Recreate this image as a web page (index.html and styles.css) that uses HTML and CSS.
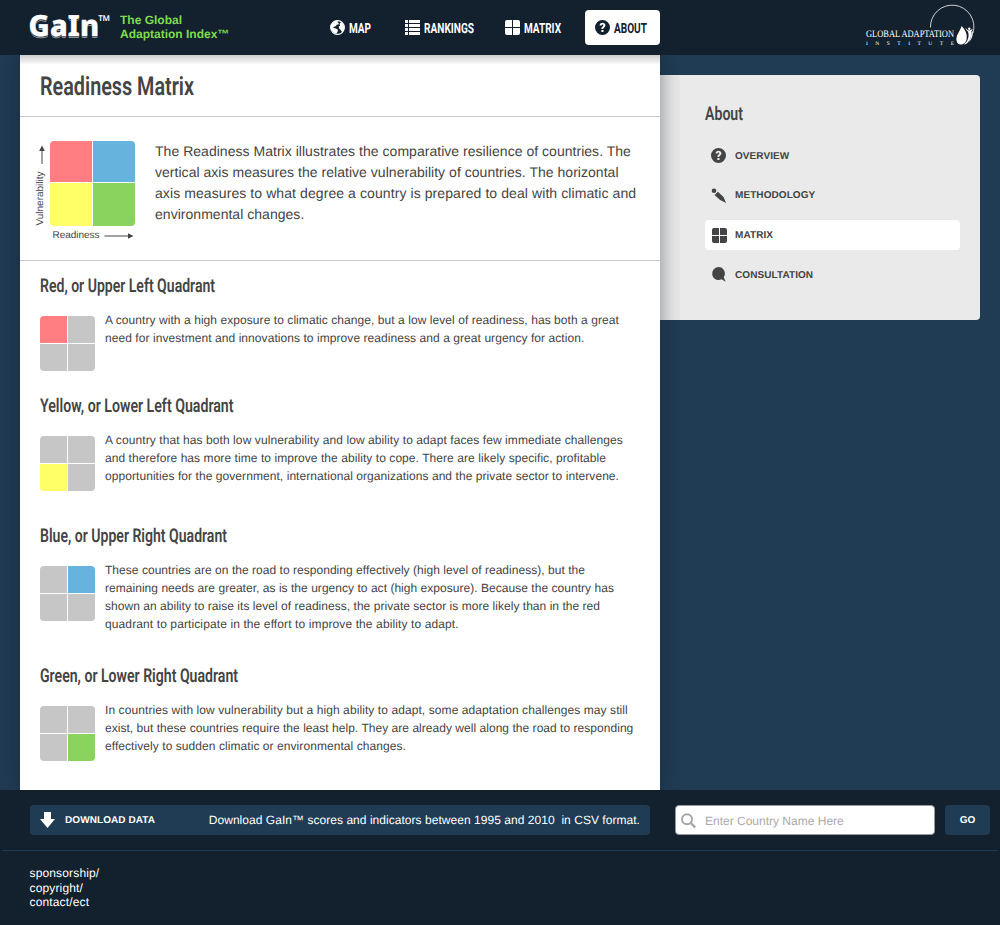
FILE: index.html
```html
<!DOCTYPE html>
<html lang="en">
<head>
<meta charset="utf-8">
<title>GaIn – Readiness Matrix</title>
<link rel="stylesheet" href="styles.css">
</head>
<body>
<svg width="0" height="0" class="defs">
  <symbol id="grid" viewBox="0 0 15 15"><path d="M2 0h5v7H0V2a2 2 0 0 1 2-2zM8 0h5a2 2 0 0 1 2 2v5H8zM0 8h7v7H2a2 2 0 0 1-2-2zM8 8h7v5a2 2 0 0 1-2 2H8z"/></symbol>
  <symbol id="help" viewBox="0 0 15 15"><path fill-rule="evenodd" d="M7.5 0a7.5 7.5 0 1 1 0 15a7.5 7.5 0 0 1 0-15zM4.6 5.600h2c0-.8.3-1.100.9-1.100.5 0 .8.3.8.7 0 .5-.3.8-.8 1.200-.7.6-1.100 1.100-1.100 2.100v.6h1.900c0-.8.3-1.100.9-1.600.7-.6 1.200-1.100 1.200-2.200 0-1.600-1.200-2.600-2.900-2.600-1.800 0-2.900 1-2.900 2.900zM6.400 9.900h2.100v2.100h-2.100z"/></symbol>
</svg>
<header class="top">
  <a class="logo"><span>GaIn</span><sup>TM</sup></a>
  <div class="tagline">The Global<br>Adaptation Index™</div>
  <nav class="nav">
    <a class="map"><svg width="15" height="15"><circle cx="7.500" cy="7.500" r="6.900" fill="none" stroke="#fff" stroke-width="1.100"/><path fill="#fff" d="M1.500 4L4.500 1l3.500-.5-.5 1.700 1.500 1-.8 1.300-1.500.2-1 1.500-2 .6L3.300 7.900l2 .4 2.700 1.400-.4 2-1.600 2.300-2.500-1.400L1 9.500.7 6zM10 3l1.500-1 2 2.300 1 3-.8 3.700-1.600 1.500-1.300-2.600L9 8.500l-.2-2 1.500-1.100-.8-1z"/></svg><svg class="cond" width="22" height="16"><text x="0" y="13" textLength="22" lengthAdjust="spacingAndGlyphs">MAP</text></svg></a>
    <a class="rank"><svg width="15" height="15" fill="#fff"><path d="M0 0h3v3H0zM4 0h11v3H4zM0 4h3v3H0zM4 4h11v3H4zM0 8h3v3H0zM4 8h11v3H4zM0 12h3v3H0zM4 12h11v3H4z"/></svg><svg class="cond" width="51" height="16"><text x="0" y="13" textLength="50" lengthAdjust="spacingAndGlyphs">RANKINGS</text></svg></a>
    <a class="matrix"><svg width="15" height="15" fill="#fff"><use href="#grid"/></svg><svg class="cond" width="38" height="16"><text x="0" y="13" textLength="37" lengthAdjust="spacingAndGlyphs">MATRIX</text></svg></a>
    <a class="active"><svg width="15" height="15" fill="#13202d"><use href="#help"/></svg><svg class="cond" width="34" height="16"><text x="0" y="13" textLength="33" lengthAdjust="spacingAndGlyphs">ABOUT</text></svg></a>
  </nav>
  <svg class="institute" width="112" height="48">
    <path d="M65.500 22.500A21.700 21.700 0 1 1 108 28" fill="none" stroke="#fff" stroke-width=".8"/>
    <path d="M96.500 21c4 4 5.800 8 5.200 12.500-.5 4-3 6.200-6.200 6-3-.3-4.500-3-4-6.800.5-4 3.500-6.200 5-11.700z" fill="#fff"/>
    <circle cx="104.300" cy="23.800" r="1.200"/>
    <path d="M100.500 22.500c1.500 2.500 3 3.300 4.500 2.800 1.200-.3 2-1 2.700-2-.2 1.500-.8 2.600-1.500 3.400.6 4-1 9-4.200 11.500-1 .8-2 1.200-3 1.200 4-3.500 5.500-8 4-12.700-1.200-1-2.200-2.500-2.500-4.200zM107.800 26c.4 4.500-1 8.500-4 11.200 1.800-3 2.800-6.500 2.800-10z" fill="#fff"/>
    <text x="1" y="32" textLength="88" lengthAdjust="spacingAndGlyphs" font-size="10">GLOBAL ADAPTATION</text>
    <text x="1" y="40" textLength="88" font-size="5.500">INSTITUTE</text>
  </svg>
</header>
<div class="stage">
  <main class="sheet">
    <div class="title"><svg class="cond" width="170" height="32"><text x="0" y="25" textLength="154" lengthAdjust="spacingAndGlyphs">Readiness Matrix</text></svg></div>
    <section class="intro">
      <svg class="chart" width="105" height="105" viewBox="0 0 105 105">
        <path fill="#ff7e81" d="M19 1h38v41H15V5a4 4 0 0 1 4-4z"/><path fill="#66b3de" d="M58 1h38a4 4 0 0 1 4 4v37H58z"/><path fill="#ff6" d="M15 43h42v43H19a4 4 0 0 1-4-4z"/><path fill="#8ad35f" d="M58 43h42v39a4 4 0 0 1-4 4H58z"/>
        <path d="M7 10v14M69.500 96h24" stroke="#444" fill="none"/><path fill="#444" d="M4.200 11l2.800-5.500 2.800 5.500zM93 93.200l5.500 2.800-5.500 2.800z"/>
        <text x="17.500" y="98" textLength="47">Readiness</text><text transform="translate(8 85.500) rotate(-90)" textLength="54">Vulnerability</text>
      </svg>
      <p>The Readiness Matrix illustrates the comparative resilience of countries. The<br>vertical axis measures the relative vulnerability of countries. The horizontal<br><span class="loose">axis measures to what degree a country is prepared to deal with climatic and</span><br>environmental changes.</p>
    </section>
    <section class="quad q1">
      <svg class="cond" width="200" height="24"><text x="0" y="19" textLength="175" lengthAdjust="spacingAndGlyphs">Red, or Upper Left Quadrant</text></svg>
      <div class="row"><div class="squares"><i class="red"></i><i></i><i></i><i></i></div>
      <p>A country with a high exposure to climatic change, but a low level of readiness, has both a great<br>need for investment and innovations to improve readiness and a great urgency for action.</p></div>
    </section>
    <section class="quad q2">
      <svg class="cond" width="200" height="24"><text x="0" y="19" textLength="193.500" lengthAdjust="spacingAndGlyphs">Yellow, or Lower Left Quadrant</text></svg>
      <div class="row"><div class="squares"><i></i><i></i><i class="yellow"></i><i></i></div>
      <p><span class="loose">A country that has both low vulnerability and low ability to adapt faces few immediate challenges</span><br>and therefore has more time to improve the ability to cope. There are likely specific, profitable<br>opportunities for the government, international organizations and the private sector to intervene.</p></div>
    </section>
    <section class="quad q3">
      <svg class="cond" width="200" height="24"><text x="0" y="19" textLength="187" lengthAdjust="spacingAndGlyphs">Blue, or Upper Right Quadrant</text></svg>
      <div class="row"><div class="squares"><i></i><i class="blue"></i><i></i><i></i></div>
      <p><span class="tight">These countries are on the road to responding effectively (high level of readiness), but the<br>remaining needs are greater, as is the urgency to act (high exposure). Because the country has<br>shown an ability to raise its level of readiness, the private sector is more likely than in the red</span><br><span class="wide">quadrant to participate in the effort to improve the ability to adapt.</span></p></div>
    </section>
    <section class="quad q4">
      <svg class="cond" width="210" height="24"><text x="0" y="19" textLength="198" lengthAdjust="spacingAndGlyphs">Green, or Lower Right Quadrant</text></svg>
      <div class="row"><div class="squares"><i></i><i></i><i></i><i class="green"></i></div>
      <p><span class="loose">In countries with low vulnerability but a high ability to adapt, some adaptation challenges may still</span><br><span class="tight">exist, but these countries require the least help. They are already well along the road to responding</span><br>effectively to sudden climatic or environmental changes.</p></div>
    </section>
  </main>
  <aside class="side">
    <svg class="cond" width="60" height="24"><text x="0" y="19" textLength="38" lengthAdjust="spacingAndGlyphs">About</text></svg>
    <ul>
      <li class="first"><svg class="up" width="15" height="15"><use href="#help"/></svg><span>OVERVIEW</span></li>
      <li><svg width="15" height="15"><circle cx="3" cy="2.800" r="2.300"/><path d="M3.600 6.900L6.900 3.700 12.500 9l2.600 5.900-6-2.800z"/></svg><span>METHODOLOGY</span></li>
      <li class="on"><svg class="sq" width="15" height="15"><use href="#grid"/></svg><span>MATRIX</span></li>
      <li><svg class="up" width="15" height="15"><path d="M7.300 0a6.500 6.500 0 0 1 5.400 10.200L14.700 14.700l-4.200-2.400A6.500 6.500 0 1 1 7.300 0z"/></svg><span>CONSULTATION</span></li>
    </ul>
  </aside>
</div>
<footer>
  <div class="bar">
    <div class="download"><svg width="16" height="16"><path fill="#fff" d="M4 0h7v7H15L7.500 16 0 7h4z"/></svg><b>DOWNLOAD DATA</b><span>Download GaIn™ scores and indicators between 1995 and 2010 &nbsp;in CSV format.</span></div>
    <div class="search"><svg width="16" height="16" fill="none" stroke="#a7a7a7"><circle cx="6" cy="6.300" r="5" stroke-width="2"/><path d="M9.700 10l4.500 4.300" stroke-width="2.400"/></svg><span>Enter Country Name Here</span></div>
    <div class="go">GO</div>
  </div>
  <div class="links">sponsorship/<br>copyright/<br>contact/ect</div>
</footer>
</body>
</html>
```
FILE: styles.css
```css
* { box-sizing: border-box; }
body { margin: 0; width: 1000px; height: 925px; overflow: hidden; background: #203b54; font-family: "Liberation Sans", Arial, sans-serif; color: #444; text-rendering: geometricPrecision; }
svg { display: block; flex: none; overflow: visible; }
.defs { position: absolute; }
p, ul { margin: 0; padding: 0; list-style: none; }
.cond { font: 600 19px Roboto, sans-serif; fill: #444; }

.top { height: 55px; background: #13202d; display: flex; align-items: flex-start; padding-left: 28.5px; }
.logo { width: 91.5px; display: flex; padding-top: 6px; color: #fff; font: 800 29px/40px "Noto Sans", sans-serif; letter-spacing: .2px; text-shadow: 0 1px #13202d, 0 2px #8a9299; -webkit-text-stroke: .4px #fff; }
.logo sup { font: 600 8px/10px "Noto Sans", sans-serif; letter-spacing: -.3px; text-shadow: none; -webkit-text-stroke: 0; margin: 8px 0 0 -1px; }
.tagline { width: 200px; padding-top: 13px; font-size: 12px; font-weight: 700; line-height: 14px; color: #7fdc4d; white-space: nowrap; }
.nav { display: flex; padding-top: 10px; }
.nav a { height: 35px; display: flex; align-items: center; padding-left: 10px; gap: 4px; }
.nav .cond { font-size: 14px; font-weight: 700; fill: #fff; }
.nav .map { width: 75px; }
.nav .rank { width: 100px; }
.nav .matrix { width: 90px; }
.nav .active { width: 75px; background: #fff; border-radius: 4px; }
.nav .active .cond { fill: #13202d; }
.nav .cond text { transform: translateY(-.5px); }
.institute { margin: 5px 0 0 205px; fill: #fff; font-family: "Liberation Serif", serif; }

.stage { height: 735px; display: flex; align-items: flex-start; padding-left: 20px; }
.sheet { width: 640px; height: 735px; background: linear-gradient(#ccc, #fff 10px); box-shadow: 0 0 20px rgba(19, 32, 45, .5); position: relative; clip-path: inset(0 -20px 0 -20px); }
.title { height: 62px; padding: 15px 20px 0; border-bottom: 1px solid #c6c6c6; }
.title .cond { font-size: 26px; }
.intro { height: 144px; border-bottom: 1px solid #c6c6c6; display: flex; padding: 23px 0 0 15px; gap: 15px; }
.intro p { font-size: 14px; line-height: 21px; white-space: nowrap; padding-top: 1px; letter-spacing: .03px; }
.chart text { font-size: 10px; fill: #444; }
.quad { height: 120px; padding: 12px 20px 0; }
.q2 { height: 130px; }
.q3 { height: 140px; }
.row { display: flex; gap: 10px; padding-top: 14px; }
.row p { font-size: 12px; line-height: 18px; white-space: nowrap; letter-spacing: .065px; }
.tight { letter-spacing: .035px; }
.loose { letter-spacing: .085px; }
.wide { letter-spacing: .11px; }
.squares { width: 55px; height: 55px; margin-top: 5px; display: grid; grid-template-columns: 27px 27px; grid-template-rows: 27px 27px; gap: 1px; border-radius: 4px; overflow: hidden; flex: none; }
.squares i { background: #c6c6c6; }
.squares .red { background: #ff7e81; }
.squares .yellow { background: #ff6; }
.squares .blue { background: #66b3de; }
.squares .green { background: #8ad35f; }

.side { width: 320px; height: 245px; margin-top: 20px; padding: 26px 20px 0 45px; background: #eaeaea; border-radius: 0 4px 4px 0; }
.side ul { padding-top: 15px; display: grid; gap: 10px; }
.side li { height: 30px; padding-left: 6px; display: flex; align-items: center; font-size: 10px; font-weight: 700; letter-spacing: .08px; border-radius: 4px; }
.side li svg { margin-right: 9px; fill: #444; }
.side .first { padding-top: 2px; }
.side li .up { margin-bottom: 2px; }
.side li .sq { margin: 1px 8px 0 1px; }
.side .on { background: #fff; }

footer { height: 135px; background: #13202d; color: #fff; }
.bar { height: 61px; margin: 0 2px; padding: 15px 8px 0 28px; border-bottom: 1px solid #203b54; display: flex; }
.bar > div { height: 30px; border-radius: 4px; display: flex; align-items: center; white-space: nowrap; }
.download { width: 620px; background: #203b54; padding: 0 10px; }
.download b { font-size: 10px; margin-left: 9px; letter-spacing: .08px; }
.download span { font-size: 12px; margin-left: auto; letter-spacing: .04px; }
.search { width: 260px; margin: 0 10px 0 25px; background: #fff; border: 1px solid #999; padding: 1px 0 0 5px; gap: 8px; font-size: 12px; color: #aaa; }
.go { width: 45px; justify-content: center; background: #203b54; font-size: 10px; font-weight: 700; }
.links { padding: 15px 0 0 29.5px; font-size: 12px; line-height: 14.500px; letter-spacing: .15px; }
```
